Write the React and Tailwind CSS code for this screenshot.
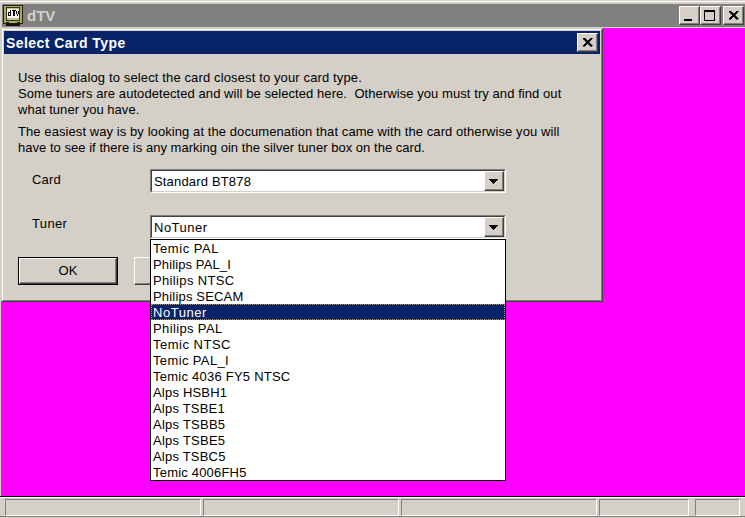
import React from 'react';

const TUNERS = [
  ['Temic PAL', 'tracking-[0.55px]'],
  ['Philips PAL_I', 'tracking-[0.12px]'],
  ['Philips NTSC', 'tracking-[0.35px]'],
  ['Philips SECAM', 'tracking-[0.18px]'],
  ['NoTuner', 'tracking-[0.55px]'],
  ['Philips PAL', 'tracking-[0.37px]'],
  ['Temic NTSC', 'tracking-[0.5px]'],
  ['Temic PAL_I', 'tracking-[0.37px]'],
  ['Temic 4036 FY5 NTSC', 'tracking-[0.24px]'],
  ['Alps HSBH1', 'tracking-[0.2px]'],
  ['Alps TSBE1', 'tracking-[0.2px]'],
  ['Alps TSBB5', 'tracking-[0.25px]'],
  ['Alps TSBE5', 'tracking-[0.25px]'],
  ['Alps TSBC5', 'tracking-[0.2px]'],
  ['Temic 4006FH5', 'tracking-[0.2px]'],
];

const RAISED =
  'border border-t-white border-l-white border-r-[#404040] border-b-[#404040] bg-[#d4d0c8] shadow-[inset_-1px_-1px_0_#808080]';

function CaptionButton({ kind }) {
  return (
    <button className={`flex h-[19px] w-[21px] shrink-0 items-center justify-center ${RAISED}`}>
      <svg width="19" height="17" viewBox="0 0 19 17" shapeRendering="crispEdges">
        {kind === 'min' && <path d="M4 12h8v2H4z" />}
        {kind === 'max' && <path d="M3 3h11v11H3zM4 5v8h9V5z" fillRule="evenodd" />}
        {kind === 'close' && (
          <path d="M5 4h2v1h1v1h1v1h1V6h1V5h1V4h2v1h-1v1h-1v1h-1v2h1v1h1v1h1v1h-2v-1h-1v-1h-1V9H9v1H8v1H7v1H5v-1h1v-1h1V9h1V7H7V6H6V5H5z" stroke="#000" strokeWidth="0.6" />
        )}
      </svg>
    </button>
  );
}

function AppIcon() {
  return (
    <svg width="21" height="21" viewBox="0 0 21 21" shapeRendering="crispEdges" className="shrink-0">
      <path d="M1 0h20v19H1z" fill="#20200c" />
      <path d="M2 1h18v17H2z" fill="#aaa860" />
      <path d="M4 2h14v14H4z" fill="#34341c" />
      <path d="M5 3h12v12H5z" fill="#c4c28a" />
      <path d="M5 4h12v9H5z" fill="#f4f4f0" />
      <path d="M8 5h1v6H6V7h2zM7 8v2h1V8zM10 5h4v1h-1v5h-2V6h-1zM14 6h1v3h1V6h1v3h-1v2h-1V9h-1z" fill="#000" fillRule="evenodd" />
      <path d="M4 17h14v1H4zM6 18h10v1H6zM4 19h14v2H4z" fill="#15150c" />
      <path d="M7 17h8v1H7z" fill="#b2b06b" />
    </svg>
  );
}

function Combo({ value, tracking }) {
  return (
    <div className="flex h-[24px] w-[356px] border border-t-[#808080] border-l-[#808080] border-r-white border-b-white bg-[#d4d0c8]">
      <div className="flex flex-1 border border-t-[#404040] border-l-[#404040] border-r-[#d4d0c8] border-b-[#d4d0c8] bg-white">
        <span className={`flex-1 pl-[2px] leading-[21px] ${tracking}`}>{value}</span>
        <button className={`flex w-[20px] items-center justify-center pr-px ${RAISED}`}>
          <svg width="9" height="5" viewBox="0 0 9 5" shapeRendering="crispEdges">
            <path d="M0 0h9v1H8v1H7v1H6v1H5v1H4V4H3V3H2V2H1V1H0z" />
          </svg>
        </button>
      </div>
    </div>
  );
}

function TunerList() {
  return (
    <ul className="absolute top-[24px] left-0 h-[242px] w-[356px] border border-black bg-white">
      {TUNERS.map(([name, tracking]) => (
        <li
          key={name}
          className={`h-[16px] pl-[2px] leading-[17px] ${tracking} ${
            name === 'NoTuner'
              ? 'bg-[#0a246a] text-white outline-1 -outline-offset-1 outline-dotted outline-[#a39a80]'
              : ''
          }`}
        >
          {name}
        </li>
      ))}
    </ul>
  );
}

function StatusPanel({ className }) {
  return (
    <div
      className={`h-[17px] shrink-0 border border-t-[#808080] border-l-[#808080] border-r-white border-b-white ${className}`}
    />
  );
}

export default function App() {
  return (
    <div className="flex h-[518px] w-[745px] flex-col overflow-hidden bg-[#d4d0c8] font-['Liberation_Sans',Arial,sans-serif] text-[13px] whitespace-pre text-black">
      <div className="mt-px h-px shrink-0 bg-white" />
      <header className="mt-[2px] ml-[2px] flex h-[23px] shrink-0 items-center bg-[#808080] pr-px">
        <AppIcon />
        <h1 className="ml-[4px] flex-1 text-[15px] leading-[22px] font-bold text-[#d4d0c8]">dTV</h1>
        <CaptionButton kind="min" />
        <CaptionButton kind="max" />
        <div className="w-[2px]" />
        <CaptionButton kind="close" />
      </header>
      <main className="mt-px ml-px h-[468px] shrink-0 bg-[#ff00ff]">
        <section className="flex h-[274px] w-[602px] flex-col border border-t-[#d4d0c8] border-l-[#d4d0c8] border-r-[#404040] border-b-[#404040] bg-[#d4d0c8]">
          <div className="flex flex-1 flex-col border border-t-white border-l-white border-r-[#808080] border-b-[#808080] p-px">
            <div className="flex h-[23px] shrink-0 items-center bg-[#0a246a] pr-[2px] pl-[2px]">
              <h2 className="flex-1 text-[14px] leading-[22px] font-bold tracking-[0.45px] text-white">Select Card Type</h2>
              <CaptionButton kind="close" />
            </div>
            <div className="flex flex-col pt-[16px] pl-[14px] leading-[16px]">
              <p className="tracking-[0.13px]">Use this dialog to select the card closest to your card type.</p>
              <p className="tracking-[0.07px]">Some tuners are autodetected and will be selected here.  Otherwise you must try and find out</p>
              <p className="tracking-[0.03px]">what tuner you have.</p>
              <p className="mt-[6px] tracking-[0.08px]">The easiest way is by looking at the documenation that came with the card otherwise you will</p>
              <p className="tracking-[0.03px]">have to see if there is any marking oin the silver tuner box on the card.</p>
              <div className="mt-[13px] flex">
                <label className="w-[132px] pt-[3px] pl-[14px] tracking-[0.2px]">Card</label>
                <Combo value="Standard BT878" tracking="tracking-[0.17px]" />
              </div>
              <div className="mt-[22px] flex">
                <label className="w-[132px] pt-px pl-[14px] tracking-[0.35px]">Tuner</label>
                <div className="relative z-10">
                  <Combo value="NoTuner" tracking="tracking-[0.5px]" />
                  <TunerList />
                </div>
              </div>
              <div className="mt-[18px] flex gap-[16px]">
                <div className="flex h-[28px] w-[100px] border border-black">
                  <button className={`flex-1 ${RAISED}`}>OK</button>
                </div>
                <button className={`h-[28px] w-[100px] ${RAISED}`} />
              </div>
            </div>
          </div>
        </section>
      </main>
      <footer className="flex h-[22px] shrink-0 flex-col border-t border-black">
        <div className="h-px shrink-0 bg-white" />
        <div className="mt-px flex gap-[2px] pl-[5px]">
          <StatusPanel className="w-[196px]" />
          <StatusPanel className="w-[196px]" />
          <StatusPanel className="w-[196px]" />
          <StatusPanel className="w-[90px]" />
          <StatusPanel className="ml-[4px] w-[45px]" />
        </div>
        <div className="h-px shrink-0 bg-[#808080]" />
      </footer>
    </div>
  );
}
